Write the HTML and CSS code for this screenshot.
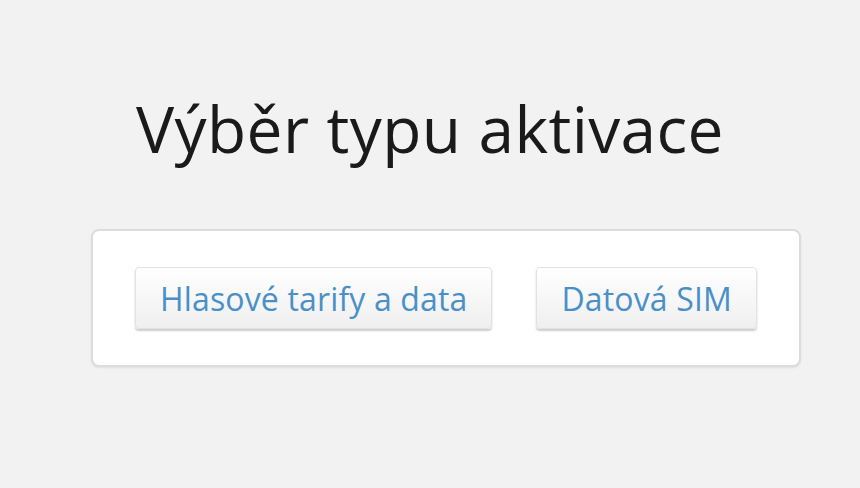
FILE: index.html
```html
<!DOCTYPE html>
<html lang="cs">
<head>
<meta charset="utf-8">
<link rel="stylesheet" href="styles.css">
</head>
<body>
<div class="page">
  <h1 class="title">Výběr typu aktivace</h1>
  <div class="card">
    <button class="btn">Hlasové tarify a data</button>
    <button class="btn">Datová SIM</button>
  </div>
</div>
</body>
</html>
```
FILE: styles.css
```css
html, body {
  margin: 0;
  padding: 0;
  background: #f2f2f2;
}
body {
  width: 860px;
  height: 488px;
  overflow: hidden;
  font-family: "Open Sans", "DejaVu Sans", sans-serif;
}
.page {
  padding-top: 86px;
}
.title {
  margin: 0;
  text-align: center;
  font-weight: 400;
  font-size: 64px;
  letter-spacing: 0.4px;
  line-height: 86px;
  color: #1a1a1a;
}
.card {
  margin: 57px 0 0 91px;
  width: 710px;
  box-sizing: border-box;
  height: 138px;
  background: #fff;
  border: 2px solid #dcdcdc;
  border-radius: 8px;
  box-shadow: 0 1px 2px rgba(0,0,0,0.08);
  display: flex;
  justify-content: center;
  align-items: center;
  gap: 44px;
}
.btn {
  font-family: "Open Sans", "DejaVu Sans", sans-serif;
  font-size: 32px;
  letter-spacing: 0.15px;
  color: #4a90c8;
  height: 62px;
  padding: 0 24px;
  background: linear-gradient(#ffffff, #efefef);
  border: 1px solid #e2e2e2;
  border-radius: 4px;
  box-shadow: 0 2px 2px rgba(0,0,0,0.2);
}
```
